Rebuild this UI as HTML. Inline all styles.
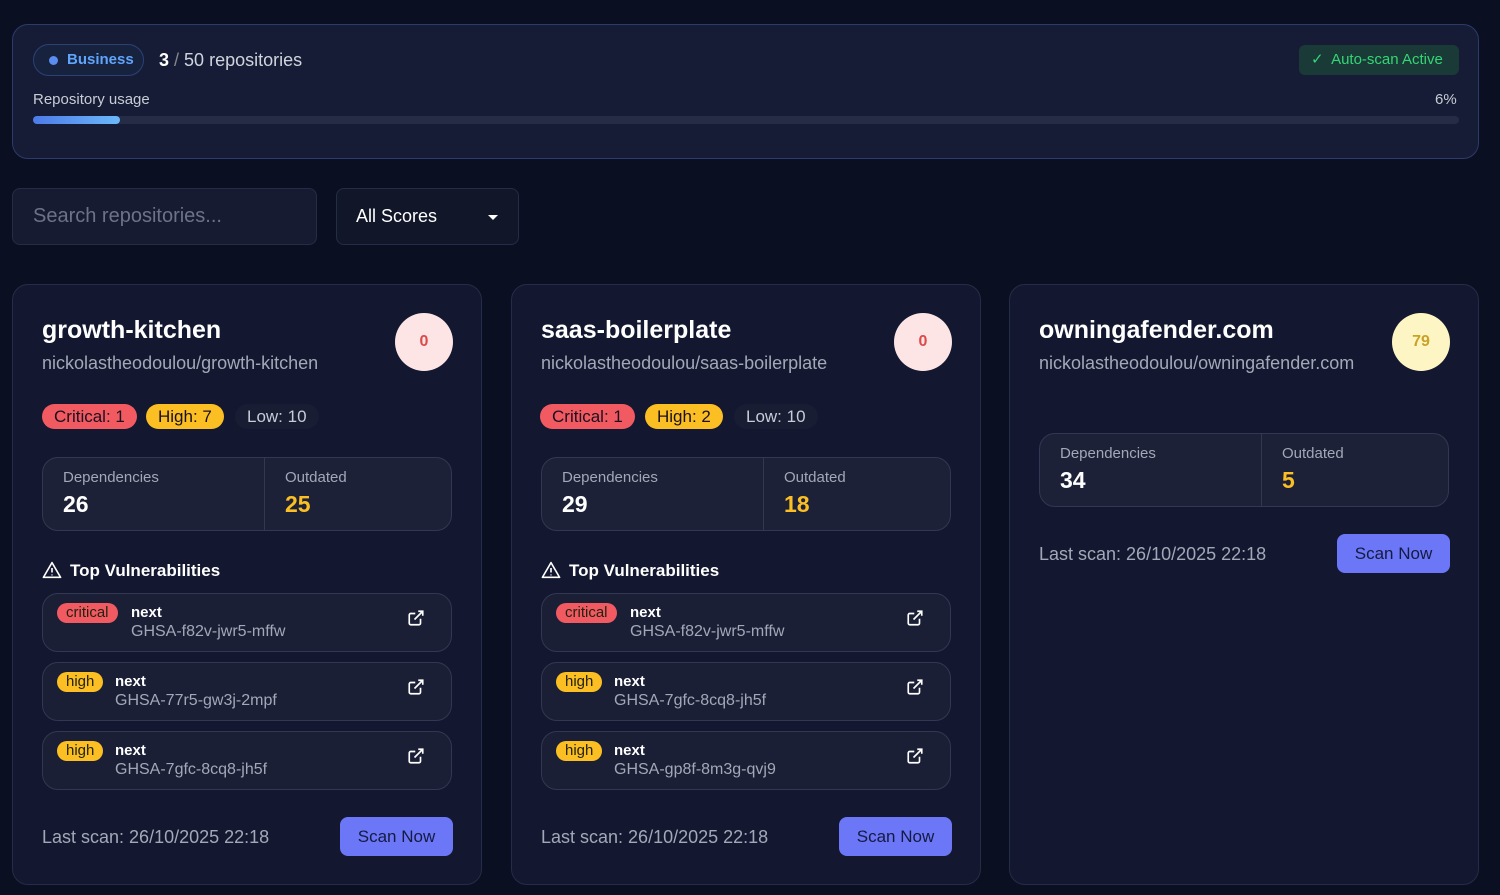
<!DOCTYPE html>
<html><head><meta charset="utf-8"><style>
*{box-sizing:border-box;margin:0;padding:0}
body{width:1500px;height:895px;background:#0b0f22;font-family:"Liberation Sans",sans-serif;color:#fff;position:relative;overflow:hidden}
.abs{position:absolute}
.top{left:12px;top:24px;width:1467px;height:135px;border:1px solid #2b3b6a;border-radius:16px;background:#161c35}
.pill{left:20px;top:19px;width:111px;height:32px;border:1px solid #2b4275;border-radius:16px;background:#17223f;color:#60a5fa;font-weight:bold;font-size:15px;line-height:30px;padding-left:33px}
.pill:before{content:"";position:absolute;left:15px;top:11px;width:9px;height:9px;border-radius:50%;background:#5b8cf0}
.card{top:284px;width:470px;height:601px;border:1px solid #262c48;border-radius:16px;background:#131830}
.t{font-size:25px;font-weight:bold;left:29px;top:31px}
.p{font-size:18px;color:#a3a8b8;left:29px;top:68px}
.sc{left:382px;top:28px;width:58px;height:58px;border-radius:50%;background:#fde5e5;color:#dc4a4a;font-weight:bold;font-size:16px;text-align:center;line-height:58px}
.b{top:119px;height:25px;border-radius:13px;font-size:17px;line-height:25px;padding:0 12px;color:#1a1020}
.stats{left:29px;width:410px;height:74px;border:1px solid #323852;border-radius:16px;background:#1c2138}
.stats .l{position:absolute;top:11px;font-size:15px;color:#a3a8b8}
.stats .n{position:absolute;top:33px;font-size:23px;font-weight:bold}
.div{position:absolute;left:221px;top:0;width:1px;height:72px;background:#323852}
.vh{left:29px;top:276px;font-size:17px;font-weight:bold}
.vi{left:29px;width:410px;height:59px;border:1px solid #323852;border-radius:16px;background:#1a1f36}
.tag{position:absolute;left:14px;top:9px;height:20px;border-radius:10px;font-size:15px;line-height:20px;padding:0 9px;color:#221}
.vn{position:absolute;top:10px;font-size:15px;font-weight:bold}
.vg{position:absolute;top:29px;font-size:16px;color:#a3a8b8}
.ext{position:absolute;right:26px;top:15px}
.ls{left:29px;font-size:18px;color:#a3a8b8}
.btn{left:327px;width:113px;height:39px;border-radius:8px;background:#6b77f7;color:#151a40;font-size:17px;text-align:center;line-height:39px}
</style></head><body>
<div class="abs top">
 <div class="abs pill">Business</div>
 <div class="abs" style="left:146px;top:25px;font-size:18px;color:#d0d4de"><b style="color:#fff">3</b> <span style="color:#888">/</span> 50 repositories</div>
 <div class="abs" style="left:1286px;top:20px;width:160px;height:30px;border-radius:6px;background:#1a3a38;color:#34d673;font-size:15px;line-height:30px;padding-left:12px">✓&nbsp; Auto-scan Active</div>
 <div class="abs" style="left:20px;top:66px;font-size:15px;color:#c8ccd6">Repository usage</div>
 <div class="abs" style="left:1422px;top:66px;font-size:15px;color:#c8ccd6">6%</div>
 <div class="abs" style="left:20px;top:91px;width:1426px;height:8px;border-radius:4px;background:#262c45"></div>
 <div class="abs" style="left:20px;top:91px;width:87px;height:8px;border-radius:4px;background:linear-gradient(90deg,#4d7ae8,#6cb8fa)"></div>
</div>
<div class="abs" style="left:12px;top:188px;width:305px;height:57px;border:1px solid #262c48;border-radius:8px;background:#161b31;color:#6c7386;font-size:20px;line-height:55px;padding-left:20px">Search repositories...</div>
<div class="abs" style="left:336px;top:188px;width:183px;height:57px;border:1px solid #262c48;border-radius:8px;background:#111629;font-size:18px;line-height:55px;padding-left:19px">All Scores<span style="position:absolute;right:20px;top:26px;border-left:5px solid transparent;border-right:5px solid transparent;border-top:5px solid #fff"></span></div>

<div class="abs card" style="left:12px">
 <div class="abs t">growth-kitchen</div><div class="abs p">nickolastheodoulou/growth-kitchen</div>
 <div class="abs sc">0</div>
 <div class="abs b" style="left:29px;background:#f25a62">Critical: 1</div>
 <div class="abs b" style="left:133px;background:#fbbf24">High: 7</div>
 <div class="abs b" style="left:222px;background:#181d33;color:#c8ccd6">Low: 10</div>
 <div class="abs stats" style="top:172px"><span class="l" style="left:20px">Dependencies</span><span class="n" style="left:20px">26</span><div class="div"></div><span class="l" style="left:242px">Outdated</span><span class="n" style="left:242px;color:#fbbf24">25</span></div>
 <div class="abs vh"><svg width="20" height="18" viewBox="0 0 24 22" style="vertical-align:-3px;margin-right:8px"><path d="M12 2L1.5 20h21z" fill="none" stroke="#fff" stroke-width="2" stroke-linejoin="round"/><path d="M12 8.5v5.5M12 16.5v1" stroke="#fff" stroke-width="2"/></svg>Top Vulnerabilities</div>
 <div class="abs vi" style="top:308px"><span class="tag" style="background:#f25a62">critical</span><span class="vn" style="left:88px">next</span><span class="vg" style="left:88px">GHSA-f82v-jwr5-mffw</span><svg class="ext" width="18" height="18" viewBox="0 0 24 24" fill="none" stroke="#fff" stroke-width="2.2"><path d="M18 13v6a2 2 0 0 1-2 2H5a2 2 0 0 1-2-2V8a2 2 0 0 1 2-2h6M15 3h6v6M10 14L21 3"/></svg></div>
 <div class="abs vi" style="top:377px"><span class="tag" style="background:#fbbf24">high</span><span class="vn" style="left:72px">next</span><span class="vg" style="left:72px">GHSA-77r5-gw3j-2mpf</span><svg class="ext" width="18" height="18" viewBox="0 0 24 24" fill="none" stroke="#fff" stroke-width="2.2"><path d="M18 13v6a2 2 0 0 1-2 2H5a2 2 0 0 1-2-2V8a2 2 0 0 1 2-2h6M15 3h6v6M10 14L21 3"/></svg></div>
 <div class="abs vi" style="top:446px"><span class="tag" style="background:#fbbf24">high</span><span class="vn" style="left:72px">next</span><span class="vg" style="left:72px">GHSA-7gfc-8cq8-jh5f</span><svg class="ext" width="18" height="18" viewBox="0 0 24 24" fill="none" stroke="#fff" stroke-width="2.2"><path d="M18 13v6a2 2 0 0 1-2 2H5a2 2 0 0 1-2-2V8a2 2 0 0 1 2-2h6M15 3h6v6M10 14L21 3"/></svg></div>
 <div class="abs ls" style="top:542px">Last scan: 26/10/2025 22:18</div>
 <div class="abs btn" style="top:532px">Scan Now</div>
</div>

<div class="abs card" style="left:511px">
 <div class="abs t">saas-boilerplate</div><div class="abs p">nickolastheodoulou/saas-boilerplate</div>
 <div class="abs sc">0</div>
 <div class="abs b" style="left:28px;background:#f25a62">Critical: 1</div>
 <div class="abs b" style="left:133px;background:#fbbf24">High: 2</div>
 <div class="abs b" style="left:222px;background:#181d33;color:#c8ccd6">Low: 10</div>
 <div class="abs stats" style="top:172px"><span class="l" style="left:20px">Dependencies</span><span class="n" style="left:20px">29</span><div class="div"></div><span class="l" style="left:242px">Outdated</span><span class="n" style="left:242px;color:#fbbf24">18</span></div>
 <div class="abs vh"><svg width="20" height="18" viewBox="0 0 24 22" style="vertical-align:-3px;margin-right:8px"><path d="M12 2L1.5 20h21z" fill="none" stroke="#fff" stroke-width="2" stroke-linejoin="round"/><path d="M12 8.5v5.5M12 16.5v1" stroke="#fff" stroke-width="2"/></svg>Top Vulnerabilities</div>
 <div class="abs vi" style="top:308px"><span class="tag" style="background:#f25a62">critical</span><span class="vn" style="left:88px">next</span><span class="vg" style="left:88px">GHSA-f82v-jwr5-mffw</span><svg class="ext" width="18" height="18" viewBox="0 0 24 24" fill="none" stroke="#fff" stroke-width="2.2"><path d="M18 13v6a2 2 0 0 1-2 2H5a2 2 0 0 1-2-2V8a2 2 0 0 1 2-2h6M15 3h6v6M10 14L21 3"/></svg></div>
 <div class="abs vi" style="top:377px"><span class="tag" style="background:#fbbf24">high</span><span class="vn" style="left:72px">next</span><span class="vg" style="left:72px">GHSA-7gfc-8cq8-jh5f</span><svg class="ext" width="18" height="18" viewBox="0 0 24 24" fill="none" stroke="#fff" stroke-width="2.2"><path d="M18 13v6a2 2 0 0 1-2 2H5a2 2 0 0 1-2-2V8a2 2 0 0 1 2-2h6M15 3h6v6M10 14L21 3"/></svg></div>
 <div class="abs vi" style="top:446px"><span class="tag" style="background:#fbbf24">high</span><span class="vn" style="left:72px">next</span><span class="vg" style="left:72px">GHSA-gp8f-8m3g-qvj9</span><svg class="ext" width="18" height="18" viewBox="0 0 24 24" fill="none" stroke="#fff" stroke-width="2.2"><path d="M18 13v6a2 2 0 0 1-2 2H5a2 2 0 0 1-2-2V8a2 2 0 0 1 2-2h6M15 3h6v6M10 14L21 3"/></svg></div>
 <div class="abs ls" style="top:542px">Last scan: 26/10/2025 22:18</div>
 <div class="abs btn" style="top:532px">Scan Now</div>
</div>

<div class="abs card" style="left:1009px">
 <div class="abs t">owningafender.com</div><div class="abs p">nickolastheodoulou/owningafender.com</div>
 <div class="abs sc" style="background:#fdf6c4;color:#c9a227">79</div>
 <div class="abs stats" style="top:148px"><span class="l" style="left:20px">Dependencies</span><span class="n" style="left:20px">34</span><div class="div"></div><span class="l" style="left:242px">Outdated</span><span class="n" style="left:242px;color:#fbbf24">5</span></div>
 <div class="abs ls" style="top:259px">Last scan: 26/10/2025 22:18</div>
 <div class="abs btn" style="top:249px">Scan Now</div>
</div>
</body></html>
